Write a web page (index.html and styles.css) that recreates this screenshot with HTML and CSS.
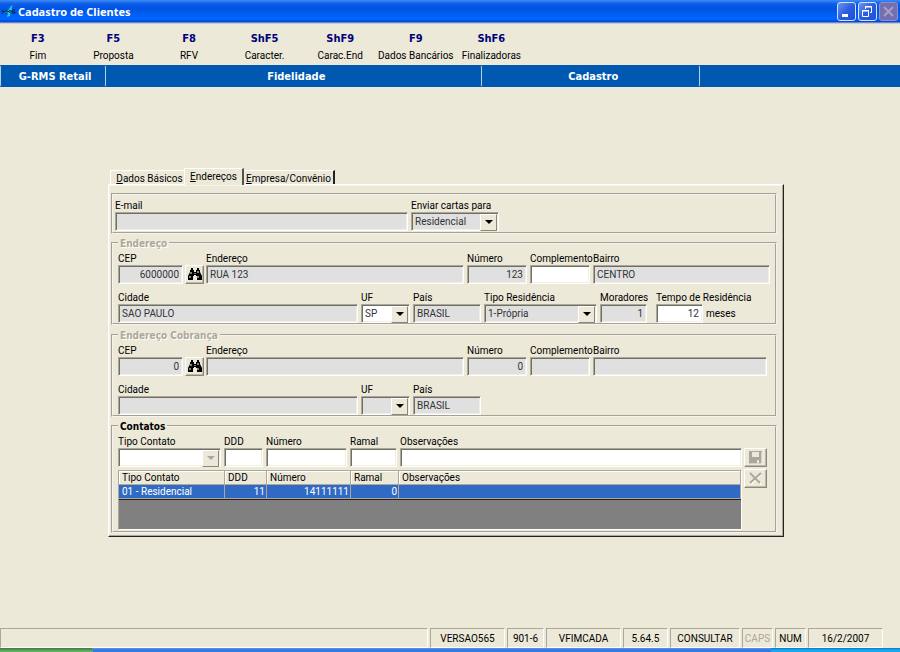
FILE: index.html
```html
<!DOCTYPE html>
<html lang="pt-BR">
<head>
    <meta charset="UTF-8" />
    <meta name="viewport" content="width=device-width, initial-scale=1" />
    <title>Cadastro de Clientes</title>
    <link rel="stylesheet" href="styles.css">
</head>
<body>

<header class="titlebar">
    <svg class="app-icon" width="16" height="16" viewBox="0 0 16 16">
        <path d="M5 13 L7 5 Q8 2 11 1 L9 5 L8 12 Z" fill="#1fd0d8"/>
        <path d="M3 9 L10 5" stroke="#1fd0d8" stroke-width="2"/>
        <path d="M0 10 V7 H2 V9 M4 10 V6 L6 8 L8 6 V9 M13 6 H10 V8 H13 V9 H10" fill="none" stroke="#06264f" stroke-width="1"/>
    </svg>
    <h1>Cadastro de Clientes</h1>
    <div class="window-buttons">
        <button type="button" aria-label="Minimizar">
            <svg width="17" height="17" viewBox="0 0 17 17"><path d="M4 11h6v3H4z" fill="#fff"/></svg>
        </button>
        <button type="button" aria-label="Restaurar">
            <svg width="17" height="17" viewBox="0 0 17 17" fill="none" stroke="#fff"><path d="M6.500 6V3.500H12.500V9.500H11M6 4H13"/><path d="M3.500 7.500H9.500V13.500H3.500ZM3 8H10"/></svg>
        </button>
        <button type="button" class="off" aria-label="Fechar" disabled>
            <svg width="17" height="17" viewBox="0 0 17 17"><path d="M4 4L13 13M13 4L4 13" stroke="#a99fc4" stroke-width="2"/></svg>
        </button>
    </div>
</header>

<nav class="toolbar">
    <button type="button"><b>F3</b><span>Fim</span></button>
    <button type="button"><b>F5</b><span>Proposta</span></button>
    <button type="button"><b>F8</b><span>RFV</span></button>
    <button type="button"><b>ShF5</b><span>Caracter.</span></button>
    <button type="button"><b>ShF9</b><span>Carac.End</span></button>
    <button type="button"><b>F9</b><span>Dados Bancários</span></button>
    <button type="button"><b>ShF6</b><span>Finalizadoras</span></button>
</nav>

<div class="band">
    <div class="band-system">G-RMS Retail</div>
    <div class="band-module">Fidelidade</div>
    <div class="band-screen">Cadastro</div>
</div>

<main>
    <div class="tabs" role="tablist">
        <button type="button" role="tab" class="first"><u>D</u>ados Básicos</button>
        <button type="button" role="tab" class="active" aria-selected="true"><u>E</u>ndereços</button>
        <button type="button" role="tab" class="last"><u>E</u>mpresa/Convênio</button>
    </div>

    <form class="panel">
        <fieldset class="correspondencia">
            <div class="row">
                <div class="field email">
                    <label for="email">E-mail</label>
                    <input type="text" id="email" readonly>
                </div>
                <div class="field cartas">
                    <label for="cartas">Enviar cartas para</label>
                    <div class="combo gray"><select id="cartas"><option>Residencial</option></select></div>
                </div>
            </div>
        </fieldset>

        <fieldset>
            <legend>Endereço</legend>
            <div class="row">
                <div class="field cep">
                    <label for="cep">CEP</label>
                    <input type="text" id="cep" class="num" value="6000000" readonly>
                </div>
                <button type="button" class="tool find" aria-label="Procurar CEP">
                    <svg width="14" height="13" viewBox="0 0 14 13"><path d="M3 0H5V2H6V4H8V2H9V0H11V2H12V4L14 8V12H9V8H8V7H6V8H5V12H0V8L2 4V2H3Z"/><path d="M2 8V10M3 4V6M10 8V10M10 3V5M7 5V6" stroke="#fff" fill="none"/></svg>
                </button>
                <div class="field endereco">
                    <label for="endereco">Endereço</label>
                    <input type="text" id="endereco" value="RUA 123" readonly>
                </div>
                <div class="field numero">
                    <label for="numero">Número</label>
                    <input type="text" id="numero" class="num" value="123" readonly>
                </div>
                <div class="field numero">
                    <label for="complemento">Complemento</label>
                    <input type="text" id="complemento">
                </div>
                <div class="field fill">
                    <label for="bairro">Bairro</label>
                    <input type="text" id="bairro" value="CENTRO" readonly>
                </div>
            </div>
            <div class="row">
                <div class="field cidade">
                    <label for="cidade">Cidade</label>
                    <input type="text" id="cidade" value="SAO PAULO" readonly>
                </div>
                <div class="field uf">
                    <label for="uf">UF</label>
                    <div class="combo"><select id="uf"><option>SP</option></select></div>
                </div>
                <div class="field pais">
                    <label for="pais">País</label>
                    <input type="text" id="pais" value="BRASIL" readonly>
                </div>
                <div class="field tipo-residencia">
                    <label for="tipo-residencia">Tipo Residência</label>
                    <div class="combo gray"><select id="tipo-residencia"><option>1-Própria</option></select></div>
                </div>
                <div class="field moradores">
                    <label for="moradores">Moradores</label>
                    <input type="text" id="moradores" class="num" value="1" readonly>
                </div>
                <div class="field tempo">
                    <label for="tempo">Tempo de Residência</label>
                    <input type="text" id="tempo" class="num" value="12">
                </div>
                <span class="unit">meses</span>
            </div>
        </fieldset>

        <fieldset class="cobranca">
            <legend>Endereço Cobrança</legend>
            <div class="row">
                <div class="field cep">
                    <label for="cob-cep">CEP</label>
                    <input type="text" id="cob-cep" class="num" value="0" readonly>
                </div>
                <button type="button" class="tool find" aria-label="Procurar CEP de cobrança">
                    <svg width="14" height="13" viewBox="0 0 14 13"><path d="M3 0H5V2H6V4H8V2H9V0H11V2H12V4L14 8V12H9V8H8V7H6V8H5V12H0V8L2 4V2H3Z"/><path d="M2 8V10M3 4V6M10 8V10M10 3V5M7 5V6" stroke="#fff" fill="none"/></svg>
                </button>
                <div class="field endereco">
                    <label for="cob-endereco">Endereço</label>
                    <input type="text" id="cob-endereco" readonly>
                </div>
                <div class="field numero">
                    <label for="cob-numero">Número</label>
                    <input type="text" id="cob-numero" class="num" value="0" readonly>
                </div>
                <div class="field numero">
                    <label for="cob-complemento">Complemento</label>
                    <input type="text" id="cob-complemento" readonly>
                </div>
                <div class="field fill">
                    <label for="cob-bairro">Bairro</label>
                    <input type="text" id="cob-bairro" readonly>
                </div>
            </div>
            <div class="row">
                <div class="field cidade">
                    <label for="cob-cidade">Cidade</label>
                    <input type="text" id="cob-cidade" readonly>
                </div>
                <div class="field uf">
                    <label for="cob-uf">UF</label>
                    <div class="combo gray"><select id="cob-uf"><option></option></select></div>
                </div>
                <div class="field pais">
                    <label for="cob-pais">País</label>
                    <input type="text" id="cob-pais" value="BRASIL" readonly>
                </div>
            </div>
        </fieldset>

        <fieldset class="contatos">
            <legend>Contatos</legend>
            <div class="contatos-body">
                <div class="contatos-main">
                    <div class="row">
                        <div class="field tipo-contato">
                            <label for="tipo-contato">Tipo Contato</label>
                            <div class="combo off"><select id="tipo-contato" disabled><option></option></select></div>
                        </div>
                        <div class="field ddd">
                            <label for="ddd">DDD</label>
                            <input type="text" id="ddd">
                        </div>
                        <div class="field telefone">
                            <label for="telefone">Número</label>
                            <input type="text" id="telefone">
                        </div>
                        <div class="field ramal">
                            <label for="ramal">Ramal</label>
                            <input type="text" id="ramal">
                        </div>
                        <div class="field fill">
                            <label for="obs">Observações</label>
                            <input type="text" id="obs">
                        </div>
                    </div>
                    <div class="grid-box">
                        <table>
                            <thead>
                                <tr>
                                    <th class="col-tipo">Tipo Contato</th>
                                    <th class="col-ddd">DDD</th>
                                    <th class="col-numero">Número</th>
                                    <th class="col-ramal">Ramal</th>
                                    <th>Observações</th>
                                </tr>
                            </thead>
                            <tbody>
                                <tr>
                                    <td>01 - Residencial</td>
                                    <td class="num">11</td>
                                    <td class="num">14111111</td>
                                    <td class="num">0</td>
                                    <td></td>
                                </tr>
                            </tbody>
                        </table>
                    </div>
                </div>
                <div class="contatos-tools">
                    <button type="button" class="tool" aria-label="Gravar contato" disabled>
                        <svg width="13" height="13" viewBox="0 0 13 13"><path d="M0 0H13V13H1L0 12Z" fill="#aca899"/><path d="M3 1H10V6H3ZM8 9H10V12H8Z" fill="#ece9d8"/><path d="M13 1V13H1" stroke="#fff" fill="none"/></svg>
                    </button>
                    <button type="button" class="tool" aria-label="Excluir contato" disabled>
                        <svg width="13" height="13" viewBox="0 0 13 13" fill="none"><path d="M2 2L12 12M12 2L2 12" stroke="#fff" stroke-width="2"/><path d="M1 1L11 11M12 1L1 11" stroke="#aca899" stroke-width="2"/></svg>
                    </button>
                </div>
            </div>
        </fieldset>
    </form>
</main>

<footer>
    <div class="status">
        <div class="status-message"></div>
        <div class="st-75">VERSAO565</div>
        <div class="st-37">901-6</div>
        <div class="st-75">VFIMCADA</div>
        <div class="st-45">5.64.5</div>
        <div class="st-70">CONSULTAR</div>
        <div class="st-31 off">CAPS</div>
        <div class="st-31">NUM</div>
        <div class="st-75">16/2/2007</div>
    </div>
    <div class="taskbar"><div class="start"></div><div class="tray"></div></div>
</footer>

</body>
</html>
```
FILE: styles.css
```css
* {
    box-sizing: border-box;
}

body {
    display: flex;
    flex-direction: column;
    min-height: 100vh;
    margin: 0;
    background-color: #ece9d8;
    color: #000;
    font: 10px/14px Roboto, "Liberation Sans", Arial, sans-serif;
}

button, input, select {
    margin: 0;
    padding: 0;
    border: 0;
    border-radius: 0;
    background: none;
    color: inherit;
    font: inherit;
}

/* title bar */
.titlebar {
    display: flex;
    align-items: center;
    height: 24px;
    padding: 0 2px;
    background: linear-gradient(#3c8cf5 0, #0a5be8 4px, #0053e1 9px, #0062fa 16px, #0066ff 19px, #0046cc 22px, #c8c8d8 23px);
    color: #fff;
}

.titlebar h1 {
    flex: 1;
    margin: 0;
    font: bold 11px/22px "Noto Sans", sans-serif;
}

.window-buttons {
    display: flex;
    gap: 2px;
    margin-top: -2px;
}

.window-buttons button {
    width: 19px;
    height: 19px;
    border: 1px solid #d6e2fa;
    border-radius: 3px;
    background: linear-gradient(135deg, #6b95f2, #2a5de0 50%, #1c50d8);
}

.window-buttons .off {
    border-color: #8f8fcb;
    background: #746fb0;
}

.window-buttons svg {
    display: block;
}

/* function keys */
.toolbar {
    display: flex;
    height: 41px;
    padding-top: 6px;
}

.toolbar button {
    display: flex;
    flex-direction: column;
    align-items: center;
    width: 8.4%;
    line-height: 17px;
    white-space: nowrap;
}

.toolbar b {
    color: #00007b;
    font: bold 11px/17px "DejaVu Sans Condensed", "DejaVu Sans", sans-serif;
}

.band {
    display: flex;
    height: 22px;
    background-color: #0058b0;
    color: #fff;
    font: bold 11px/22px "DejaVu Sans Condensed", "DejaVu Sans", sans-serif;
    text-align: center;
}

.band div {
    padding-left: 4px;
    border: 1px solid #0058b0;
    border-right-color: #b4d0ea;
    border-radius: 2px;
}

.band .band-system {
    width: 11.8%;
    border-left-color: #b4d0ea;
}

.band-module {
    width: 41.8%;
}

.band-screen {
    width: 24.2%;
}

main {
    flex: 1;
    width: 75.1%;
    margin: 81px 0 0 12%;
}

/* tabs */
.tabs {
    display: flex;
    align-items: flex-end;
    height: 16px;
    padding-left: 2px;
}

.tabs button {
    height: 14px;
    border-top: 1px solid #fff;
    border-left: 1px solid #fff;
    line-height: 16px;
    text-align: center;
    white-space: nowrap;
}

.tabs .first {
    width: 74px;
    padding-left: 4px;
}

.tabs .active {
    width: 60px;
    height: 17px;
    margin-bottom: -1px;
    border-right: 2px solid #55534a;
    background-color: #ece9d8;
    position: relative;
}

.tabs .last {
    width: 91px;
    border-left: 0;
    border-right: 2px solid #222;
}

.panel {
    padding: 8px 6px 3px 2px;
    border: 1px solid;
    border-color: #fff #222 #222 #fff;
    box-shadow: inset -1px -1px #aca899, inset 1px 1px #f6f4ea;
}

/* groups */
fieldset {
    min-width: 0;
    margin: 0 0 3px;
    padding: 1px 5px 0;
    border: 2px groove #f6f4ea;
}

.correspondencia {
    margin-bottom: 2px;
    padding: 3px 2px 1px;
}

.cobranca {
    margin-bottom: 2px;
    padding-right: 8px;
}

.contatos {
    margin-bottom: 0;
    padding-bottom: 1px;
}

legend {
    height: 14px;
    padding: 0 2px;
    color: #aca899;
    font: bold 10px/16px "DejaVu Sans Condensed", "DejaVu Sans", sans-serif;
    text-shadow: 1px 1px #fff;
}

.contatos legend {
    color: #000;
    text-shadow: none;
}

.row {
    display: flex;
    align-items: flex-end;
    gap: 3px;
}

.row + .row {
    margin-top: 6px;
}

.field {
    flex: none;
    min-width: 0;
}

.field label {
    display: block;
    height: 14px;
    line-height: 15px;
    white-space: nowrap;
}

.field.fill {
    flex: 1;
}

.email {
    width: 293px;
}

.cartas {
    width: 88px;
}

.cep {
    width: 65px;
}

.endereco {
    width: 258px;
}

.numero {
    width: 60px;
}

.cidade {
    width: 240px;
}

.uf {
    width: 49px;
}

.pais {
    width: 68px;
}

.tipo-residencia {
    width: 113px;
}

.moradores {
    width: 47px;
}

.tempo {
    width: 47px;
    margin-left: 6px;
}

.tipo-contato {
    width: 103px;
}

.ddd {
    width: 39px;
}

.telefone {
    width: 81px;
}

.ramal {
    width: 47px;
}

.unit {
    line-height: 18px;
}

/* sunken boxes */
.field input, .combo {
    display: block;
    width: 100%;
    height: 19px;
    border: 1px solid;
    border-color: #aca899 #fff #fff #aca899;
    background-color: #fff;
    box-shadow: inset 1px 1px #716f64, inset -1px -1px #f1efe2;
    color: #333;
}

.field input {
    padding: 0 3px;
}

.field input[readonly], .combo.gray {
    background-color: #e0e0e0;
}

.field .num {
    text-align: right;
}

.combo {
    position: relative;
}

.combo select {
    width: 100%;
    height: 17px;
    padding: 0 16px 0 3px;
    appearance: none;
    opacity: 1;
}

.combo::before {
    content: "";
    position: absolute;
    top: 1px;
    right: 1px;
    width: 15px;
    height: 15px;
    border: 1px solid;
    border-color: #fff #8b887a #8b887a #fff;
    background-color: #ece9d8;
    pointer-events: none;
}

.combo::after {
    content: "";
    position: absolute;
    top: 7px;
    right: 5px;
    border: 4px solid transparent;
    border-top-color: #000;
    border-bottom: 0;
    pointer-events: none;
}

.combo.off::after {
    border-top-color: #aca899;
}

.tool {
    display: flex;
    align-items: center;
    justify-content: center;
    height: 19px;
    border: 1px solid;
    border-color: #fff #8b887a #8b887a #fff;
    box-shadow: inset -1px -1px #bdb9a8;
}

.find {
    width: 19px;
    margin: 0 -1px;
}

/* contacts */
.contatos-body {
    display: flex;
    gap: 2px;
    padding-right: 3px;
}

.contatos-main {
    flex: 1;
    min-width: 0;
}

.contatos-tools {
    display: flex;
    flex-direction: column;
    gap: 2px;
    width: 23px;
    padding-top: 14px;
}

.grid-box {
    height: 60px;
    margin-top: 3px;
    border: 1px solid;
    border-color: #aca899 #fff #fff #aca899;
    background-color: #808080;
}

table {
    width: 100%;
    border-collapse: separate;
    border-spacing: 0;
    border-bottom: 1px solid #222;
    table-layout: fixed;
}

th, td {
    height: 14px;
    padding: 0 1px 0 3px;
    border-right: 1px solid #aca899;
    border-bottom: 1px solid #aca899;
    text-align: left;
    font-weight: normal;
    line-height: 13px;
    white-space: nowrap;
}

th {
    background-color: #ece9d8;
    box-shadow: inset 1px 1px #fff;
}

td {
    background-color: #316ac5;
    color: #fff;
}

td.num {
    text-align: right;
}

.col-tipo {
    width: 106px;
}

.col-ddd {
    width: 42px;
}

.col-numero {
    width: 84px;
}

.col-ramal {
    width: 48px;
}

/* status bar */
.status {
    display: flex;
    gap: 2px;
    padding-right: 17px;
    line-height: 19px;
    text-align: center;
}

.status div {
    height: 20px;
    border: 1px solid;
    border-color: #aca899 #fff #fff #aca899;
}

.status .off {
    color: #aca899;
}

.status-message {
    flex: 1;
}

.st-75 {
    width: 75px;
}

.st-70 {
    width: 70px;
}

.st-45 {
    width: 45px;
}

.st-37 {
    width: 37px;
}

.st-31 {
    width: 31px;
}

.taskbar {
    display: flex;
    justify-content: space-between;
    height: 4px;
    background: linear-gradient(#6a94d8, #2f7ae8 2px);
}

.start {
    width: 93px;
    border-radius: 0 3px 0 0;
    background: linear-gradient(#3c7c3c, #6cb86c);
}

.tray {
    width: 129px;
    background: linear-gradient(#0c78c0, #18a8f0 2px);
}
```
